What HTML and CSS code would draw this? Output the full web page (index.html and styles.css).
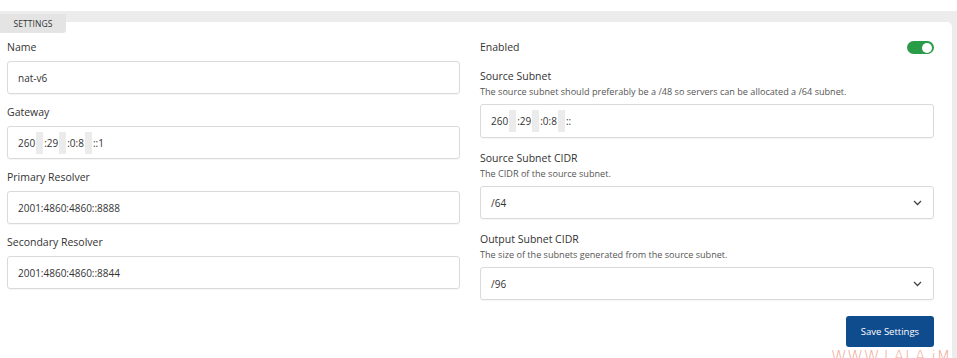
FILE: index.html
```html
<!DOCTYPE html>
<html>
<head>
<meta charset="utf-8">
<link rel="stylesheet" href="styles.css">
</head>
<body>
<div class="page">
  <div class="shell">
    <div class="card">
      <div class="tab">SETTINGS</div>
      <div class="grid">
        <div class="col">
          <div class="group">
            <div class="label">Name</div>
            <div class="field">nat-v6</div>
          </div>
          <div class="group">
            <div class="label">Gateway</div>
            <div class="field">260<span class="redact"></span>:29<span class="redact"></span>:0:8<span class="redact"></span>::1</div>
          </div>
          <div class="group">
            <div class="label">Primary Resolver</div>
            <div class="field">2001:4860:4860::8888</div>
          </div>
          <div class="group">
            <div class="label">Secondary Resolver</div>
            <div class="field">2001:4860:4860::8844</div>
          </div>
        </div>
        <div class="col">
          <div class="toggle-row">
            <div class="label">Enabled</div>
            <div class="toggle"><span class="knob"></span></div>
          </div>
          <div class="group wide">
            <div class="label">Source Subnet</div>
            <div class="help">The source subnet should preferably be a /48 so servers can be allocated a /64 subnet.</div>
            <div class="field field-tall">260<span class="redact"></span>:29<span class="redact"></span>:0:8<span class="redact"></span>::</div>
          </div>
          <div class="group wide">
            <div class="label">Source Subnet CIDR</div>
            <div class="help">The CIDR of the source subnet.</div>
            <div class="field select">/64
              <svg class="chev" width="9" height="6" viewBox="0 0 9 6"><path d="M1 1l3.5 3.5L8 1" fill="none" stroke="#444" stroke-width="1.3"/></svg>
            </div>
          </div>
          <div class="group wide">
            <div class="label">Output Subnet CIDR</div>
            <div class="help">The size of the subnets generated from the source subnet.</div>
            <div class="field select">/96
              <svg class="chev" width="9" height="6" viewBox="0 0 9 6"><path d="M1 1l3.5 3.5L8 1" fill="none" stroke="#444" stroke-width="1.3"/></svg>
            </div>
          </div>
        </div>
      </div>
      <div class="footer">
        <button class="btn">Save Settings</button>
      </div>
      <div class="watermark">WWW.LALA.iM</div>
    </div>
  </div>
</div>
</body>
</html>
```
FILE: styles.css
```css
html, body {
  margin: 0;
  padding: 0;
  background: #ffffff;
  font-family: "Open Sans", "Noto Sans", sans-serif;
  color: #333;
  overflow: hidden;
}
.page {
  padding-top: 11px;
  height: 347px;
}
.shell {
  background: #ececec;
  padding: 11px 5px 0 0;
  height: 336px;
}
.card {
  position: relative;
  background: #fff;
  border-radius: 0 5px 0 0;
  height: 336px;
  padding: 18px 18px 0 7px;
  box-sizing: border-box;
}
.tab {
  position: absolute;
  left: 0;
  top: -8px;
  width: 66px;
  height: 19px;
  background: #e4e4e4;
  border-radius: 0 0 3px 0;
  font-size: 8.5px;
  line-height: 19px;
  text-align: center;
  color: #333;
  letter-spacing: 0.1px;
}
.grid {
  display: grid;
  grid-template-columns: 453px 454px;
  column-gap: 20px;
}
.label {
  font-size: 10.5px;
  line-height: 15px;
  color: #333;
}
.group {
  margin-bottom: 11px;
}
.group > .label {
  margin-bottom: 6px;
}
.group.wide {
  margin-bottom: 13px;
}
.group.wide > .label {
  margin-bottom: 0;
}
.help {
  font-size: 9.1px;
  line-height: 12px;
  color: #555;
  margin-top: 2px;
  margin-bottom: 6px;
  white-space: nowrap;
}
.field {
  height: 33px;
  box-sizing: border-box;
  border: 1px solid #dadada;
  border-radius: 3px;
  padding: 0 10px;
  display: flex;
  align-items: center;
  font-size: 10px;
  color: #333;
  box-shadow: 0 1px 1px rgba(0,0,0,0.04);
}
.field-tall {
  height: 34px;
}
.redact {
  display: inline-block;
  width: 7px;
  height: 22px;
  background: #ebebeb;
  margin: 0 1px;
}
.select {
  justify-content: space-between;
  padding-right: 11px;
}
.chev {
  display: block;
}
.toggle-row {
  display: flex;
  justify-content: space-between;
  align-items: center;
  height: 15px;
  margin-bottom: 14px;
}
.toggle {
  width: 27px;
  height: 13px;
  border-radius: 7px;
  background: #2a9b47;
  position: relative;
}
.knob {
  position: absolute;
  right: 2px;
  top: 1.5px;
  width: 10px;
  height: 10px;
  border-radius: 50%;
  background: #fff;
}
.footer {
  display: flex;
  justify-content: flex-end;
  margin-top: 3px;
}
.btn {
  width: 88px;
  height: 31px;
  background: #0f4c8e;
  color: #fff;
  border: none;
  border-radius: 3px;
  font-family: "Open Sans", "Noto Sans", sans-serif;
  font-size: 9.5px;
  padding: 0;
}
.watermark {
  position: absolute;
  left: 831px;
  top: 325px;
  font-family: "DejaVu Sans", sans-serif;
  font-size: 16px;
  font-weight: 300;
  color: #f29a88;
  letter-spacing: 0.5px;
  opacity: 0.85;
  white-space: nowrap;
}
```
